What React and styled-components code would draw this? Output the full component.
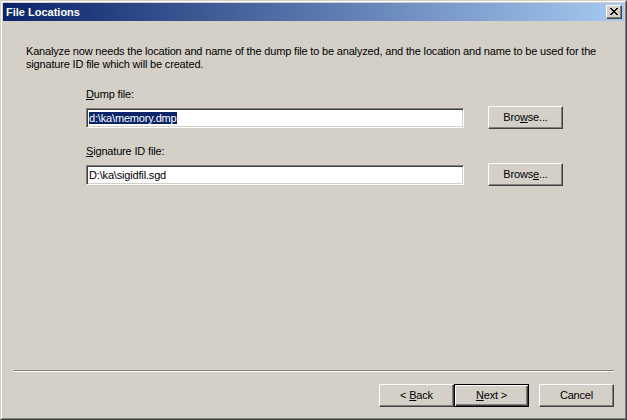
import styled, { createGlobalStyle } from "styled-components";

const GlobalStyle = createGlobalStyle`
  html, body {
    margin: 0;
    padding: 0;
    background: #d4d0c8;
  }
  body {
    font-family: Tahoma, "Liberation Sans", Arial, sans-serif;
    font-size: 11px;
    letter-spacing: -0.17px;
    color: #000;
    -webkit-font-smoothing: none;
  }
`;

const Window = styled.div`
  width: 627px;
  height: 420px;
  box-sizing: border-box;
  border: 1px solid;
  border-color: #d4d0c8 #404040 #404040 #d4d0c8;
  background: #d4d0c8;
`;

const Frame = styled.div`
  height: 100%;
  box-sizing: border-box;
  border: 1px solid;
  border-color: #fff #808080 #808080 #fff;
  padding: 1px;
  display: flex;
  flex-direction: column;
`;

const TitleBar = styled.div`
  height: 18px;
  flex: none;
  display: flex;
  align-items: center;
  justify-content: space-between;
  padding: 0 2px 0 3px;
  background: linear-gradient(to right, #0a246a, #a6caf0);
`;

const Title = styled.span`
  color: #fff;
  font-weight: bold;
  font-size: 11px;
  line-height: 13px;
  letter-spacing: 0;
`;

const CloseButton = styled.div`
  width: 16px;
  height: 14px;
  box-sizing: border-box;
  background: #d4d0c8;
  border: 1px solid;
  border-color: #fff #404040 #404040 #fff;
  box-shadow: inset -1px -1px 0 #808080;
  display: flex;
  align-items: center;
  justify-content: center;
  padding: 0 1px 1px 0;
`;

const Body = styled.div`
  flex: 1;
  display: flex;
  flex-direction: column;
  padding: 24px 0 0 23px;
`;

const Intro = styled.p`
  margin: 0;
  line-height: 13px;
`;

const Fields = styled.div`
  display: flex;
  flex-direction: column;
  gap: 16px;
  margin: 17px 0 0 60px;
`;

const Field = styled.div`
  display: grid;
  grid-template-columns: 378px 75px;
  column-gap: 24px;
  row-gap: 5px;
  align-items: center;
`;

const Label = styled.label`
  grid-column: 1 / 3;
  line-height: 13px;
`;

const Input = styled.div`
  height: 20px;
  box-sizing: border-box;
  background: #fff;
  border: 1px solid;
  border-color: #808080 #fff #fff #808080;
  box-shadow: inset 1px 1px 0 #404040, inset -1px -1px 0 #d4d0c8;
  padding: 2px 0 0 2px;
  line-height: 14px;
  white-space: nowrap;
`;

const Selected = styled.span`
  background: #0a246a;
  color: #fff;
`;

const Button = styled.div`
  width: 75px;
  height: 23px;
  box-sizing: border-box;
  background: #d4d0c8;
  border: 1px solid;
  border-color: ${(p) =>
    p.$default ? "#000" : "#fff #404040 #404040 #fff"};
  box-shadow: ${(p) =>
    p.$default
      ? "inset 1px 1px 0 #fff, inset -1px -1px 0 #404040, inset -2px -2px 0 #808080"
      : "inset -1px -1px 0 #808080"};
  display: flex;
  align-items: center;
  justify-content: center;
  padding-bottom: 1px;
  line-height: 13px;
`;

const Footer = styled.div`
  flex: none;
  display: flex;
  flex-direction: column;
  padding: 0 10px 10px 11px;
`;

const Separator = styled.div`
  height: 0;
  border-top: 1px solid #808080;
  border-bottom: 1px solid #fff;
  margin-bottom: 12px;
`;

const ButtonRow = styled.div`
  display: flex;
  justify-content: flex-end;
  gap: 10px;
`;

const ButtonPair = styled.div`
  display: flex;
`;

const U = styled.span`
  text-decoration: underline;
`;

export default function App() {
  return (
    <>
      <GlobalStyle />
      <Window>
        <Frame>
          <TitleBar>
            <Title>File Locations</Title>
            <CloseButton>
              <svg width="8" height="7" viewBox="0 0 8 7" shapeRendering="crispEdges">
                <path
                  d="M0 0h2v1h-2zM6 0h2v1h-2zM1 1h2v1h-2zM5 1h2v1h-2zM2 2h4v1h-4zM3 3h2v1h-2zM2 4h4v1h-4zM1 5h2v1h-2zM5 5h2v1h-2zM0 6h2v1h-2zM6 6h2v1h-2z"
                  fill="#000"
                />
              </svg>
            </CloseButton>
          </TitleBar>
          <Body>
            <Intro>
              Kanalyze now needs the location and name of the dump file to be analyzed, and the location and name to be used for the
              <br />
              signature ID file which will be created.
            </Intro>
            <Fields>
              <Field>
                <Label>
                  <U>D</U>ump file:
                </Label>
                <Input>
                  <Selected>d:\ka\memory.dmp</Selected>
                </Input>
                <Button>
                  <span>
                    Bro<U>w</U>se...
                  </span>
                </Button>
              </Field>
              <Field>
                <Label>
                  <U>S</U>ignature ID file:
                </Label>
                <Input>D:\ka\sigidfil.sgd</Input>
                <Button>
                  <span>
                    Brows<U>e</U>...
                  </span>
                </Button>
              </Field>
            </Fields>
          </Body>
          <Footer>
            <Separator />
            <ButtonRow>
              <ButtonPair>
                <Button>
                  <span>
                    &lt; <U>B</U>ack
                  </span>
                </Button>
                <Button $default>
                  <span>
                    <U>N</U>ext &gt;
                  </span>
                </Button>
              </ButtonPair>
              <Button>Cancel</Button>
            </ButtonRow>
          </Footer>
        </Frame>
      </Window>
    </>
  );
}
